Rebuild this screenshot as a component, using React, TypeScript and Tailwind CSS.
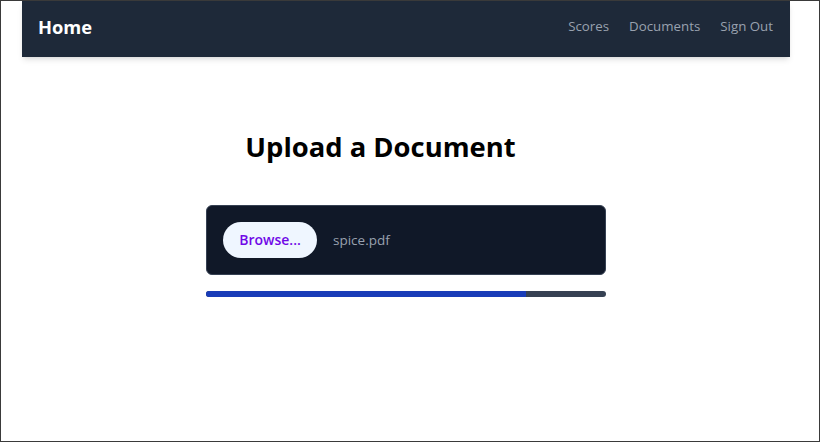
export default function App() {
  return (
    <div
      className="h-[442px] w-[820px] border border-[#3a3a3a] bg-white overflow-hidden"
      style={{ fontFamily: '"Open Sans", "Noto Sans", sans-serif' }}
    >
      <div className="pr-2">
        <nav className="mx-auto flex h-14 w-[768px] items-center justify-between bg-gray-800 pl-4 pr-[17px] pb-1 shadow-md">
          <h1 className="text-[18.3px] font-bold text-white">Home</h1>
          <div className="flex items-center gap-5 text-[13.3px] text-gray-400">
            <a>Scores</a>
            <a>Documents</a>
            <a>Sign Out</a>
          </div>
        </nav>

        <main className="flex flex-col items-center">
          <h2 className="mt-[69px] mr-[51px] text-[27.4px] font-bold text-black">Upload a Document</h2>

          <div className="mt-[38px] flex h-[70px] w-[400px] items-center gap-4 rounded-md border border-gray-700 bg-gray-900 px-4">
            <button className="h-9 w-[94px] rounded-full bg-blue-50 text-sm font-semibold text-violet-700">
              Browse...
            </button>
            <span className="text-[13.5px] text-gray-400">spice.pdf</span>
          </div>

          <div className="mt-4 h-1.5 w-[400px] overflow-hidden rounded-full bg-gray-700">
            <div className="h-full bg-blue-800" style={{ width: "80%" }} />
          </div>
        </main>
      </div>
    </div>
  );
}
